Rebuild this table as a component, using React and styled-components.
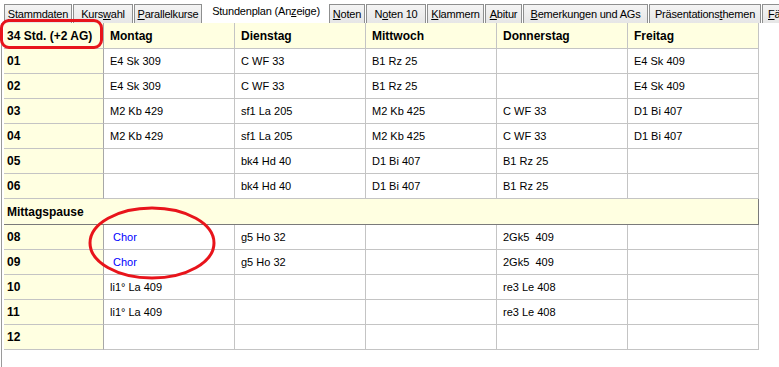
import React from 'react';
import styled, { createGlobalStyle } from 'styled-components';

const GlobalStyle = createGlobalStyle`
  html, body {
    margin: 0;
    padding: 0;
    background: #ffffff;
  }
  body {
    font-family: "Liberation Sans", Arial, sans-serif;
    font-size: 11px;
    color: #000000;
  }
`;

const Window = styled.div`
  position: relative;
  width: 779px;
  height: 367px;
  overflow: hidden;
  background: #ffffff;
`;

const TabBar = styled.div`
  display: flex;
  align-items: flex-end;
  height: 23px;
  padding-left: 4px;
  box-sizing: border-box;
  white-space: nowrap;
`;

const Tab = styled.div`
  flex: none;
  box-sizing: border-box;
  display: flex;
  justify-content: ${(p) => (p.clip ? 'flex-start' : 'center')};
  width: ${(p) => p.w}px;
  height: ${(p) => (p.active ? 23 : 19)}px;
  margin-right: ${(p) => (p.active ? 0 : 1)}px;
  padding: ${(p) => (p.active ? '3px 0 0 0' : p.clip ? '2px 0 0 5px' : '2px 0 0 0')};
  border: 1px solid #8e8f8f;
  border-bottom: none;
  border-color: ${(p) => (p.active ? '#ffffff' : '#8e8f8f')};
  background: ${(p) =>
    p.active ? '#ffffff' : 'linear-gradient(#f4f4f4, #e6e6e6)'};
  font-size: 11px;
  letter-spacing: -0.2px;
  line-height: 14px;
  overflow: hidden;

  u {
    text-decoration: underline;
    text-underline-offset: 1px;
  }
`;

const Panel = styled.div`
  margin-left: 1px;
  padding-left: 2px;
  border-left: 1px solid #9a9a9a;
  height: 344px;
`;

const Grid = styled.div`
  display: grid;
  grid-template-columns: 100px repeat(5, 131px);
  grid-template-rows: 26px repeat(6, 25px) 26px repeat(5, 25px);
  width: 755px;
`;

const Cell = styled.div`
  box-sizing: border-box;
  display: flex;
  align-items: center;
  padding-left: ${(p) => (p.indent ? 9 : p.first ? 3 : 6)}px;
  border-right: 1px solid ${(p) => (p.first ? '#a8a8a8' : '#c4c4c4')};
  border-bottom: 1px solid #c4c4c4;
  background: ${(p) => (p.head || p.first ? '#ffffe1' : '#ffffff')};
  font-weight: ${(p) => (p.head || p.first ? 'bold' : 'normal')};
  font-size: ${(p) => (p.head || p.first ? '12px' : '11px')};
  color: ${(p) => (p.blue ? '#0000ff' : '#000000')};
  white-space: pre;
  overflow: hidden;
`;

const BreakRow = styled.div`
  grid-column: 1 / -1;
  box-sizing: border-box;
  display: flex;
  align-items: center;
  padding-left: 3px;
  background: #ffffe1;
  border-right: 1px solid #7a7a7a;
  border-bottom: 1px solid #7a7a7a;
  font-weight: bold;
  font-size: 12px;
`;

const Marker = styled.div`
  position: absolute;
  left: 0;
  top: 19px;
  width: 103px;
  height: 30px;
  box-sizing: border-box;
  border: 3px solid #e8141b;
  border-radius: 9px;
  pointer-events: none;
`;

const Ring = styled.svg`
  position: absolute;
  left: 86px;
  top: 205px;
  pointer-events: none;
`;

const tabs = [
  { label: ['', 'S', 'tammdaten'], w: 68 },
  { label: ['Kurs', 'w', 'ahl'], w: 60 },
  { label: ['', 'P', 'arallelkurse'], w: 68 },
  { label: ['Stundenplan (An', 'z', 'eige)'], w: 126, active: true },
  { label: ['', 'N', 'oten'], w: 36 },
  { label: ['N', 'o', 'ten 10'], w: 60 },
  { label: ['', 'K', 'lammern'], w: 57 },
  { label: ['', 'A', 'bitur'], w: 37 },
  { label: ['', 'B', 'emerkungen und AGs'], w: 125 },
  { label: ['Präsentations', 't', 'hemen'], w: 112 },
  { label: ['', 'F', 'ächer'], w: 40, clip: true },
];

const days = ['Montag', 'Dienstag', 'Mittwoch', 'Donnerstag', 'Freitag'];

const morning = [
  ['01', 'E4 Sk 309', 'C WF 33', 'B1 Rz 25', '', 'E4 Sk 409'],
  ['02', 'E4 Sk 309', 'C WF 33', 'B1 Rz 25', '', 'E4 Sk 409'],
  ['03', 'M2 Kb 429', 'sf1 La 205', 'M2 Kb 425', 'C WF 33', 'D1 Bi 407'],
  ['04', 'M2 Kb 429', 'sf1 La 205', 'M2 Kb 425', 'C WF 33', 'D1 Bi 407'],
  ['05', '', 'bk4 Hd 40', 'D1 Bi 407', 'B1 Rz 25', ''],
  ['06', '', 'bk4 Hd 40', 'D1 Bi 407', 'B1 Rz 25', ''],
];

const afternoon = [
  ['08', 'Chor', 'g5 Ho 32', '', '2Gk5  409', ''],
  ['09', 'Chor', 'g5 Ho 32', '', '2Gk5  409', ''],
  ['10', 'li1° La 409', '', '', 're3 Le 408', ''],
  ['11', 'li1° La 409', '', '', 're3 Le 408', ''],
  ['12', '', '', '', '', ''],
];

const renderRow = (row) =>
  row.map((text, i) => {
    const isChor = text === 'Chor';
    return (
      <Cell key={row[0] + i} first={i === 0} blue={isChor} indent={isChor}>
        {text}
      </Cell>
    );
  });

export default function App() {
  return (
    <Window>
      <GlobalStyle />
      <TabBar>
        {tabs.map((t, i) => (
          <Tab key={i} w={t.w} active={t.active} clip={t.clip}>
            {t.label[0]}
            <u>{t.label[1]}</u>
            {t.label[2]}
          </Tab>
        ))}
      </TabBar>
      <Panel>
        <Grid>
          <Cell head first>34 Std. (+2 AG)</Cell>
          {days.map((d) => (
            <Cell key={d} head>{d}</Cell>
          ))}
          {morning.map(renderRow)}
          <BreakRow>Mittagspause</BreakRow>
          {afternoon.map(renderRow)}
        </Grid>
      </Panel>
      <Marker />
      <Ring width="134" height="78" viewBox="0 0 134 78">
        <ellipse cx="66" cy="38" rx="62" ry="35" fill="none" stroke="#e8141b" strokeWidth="3" />
      </Ring>
    </Window>
  );
}
